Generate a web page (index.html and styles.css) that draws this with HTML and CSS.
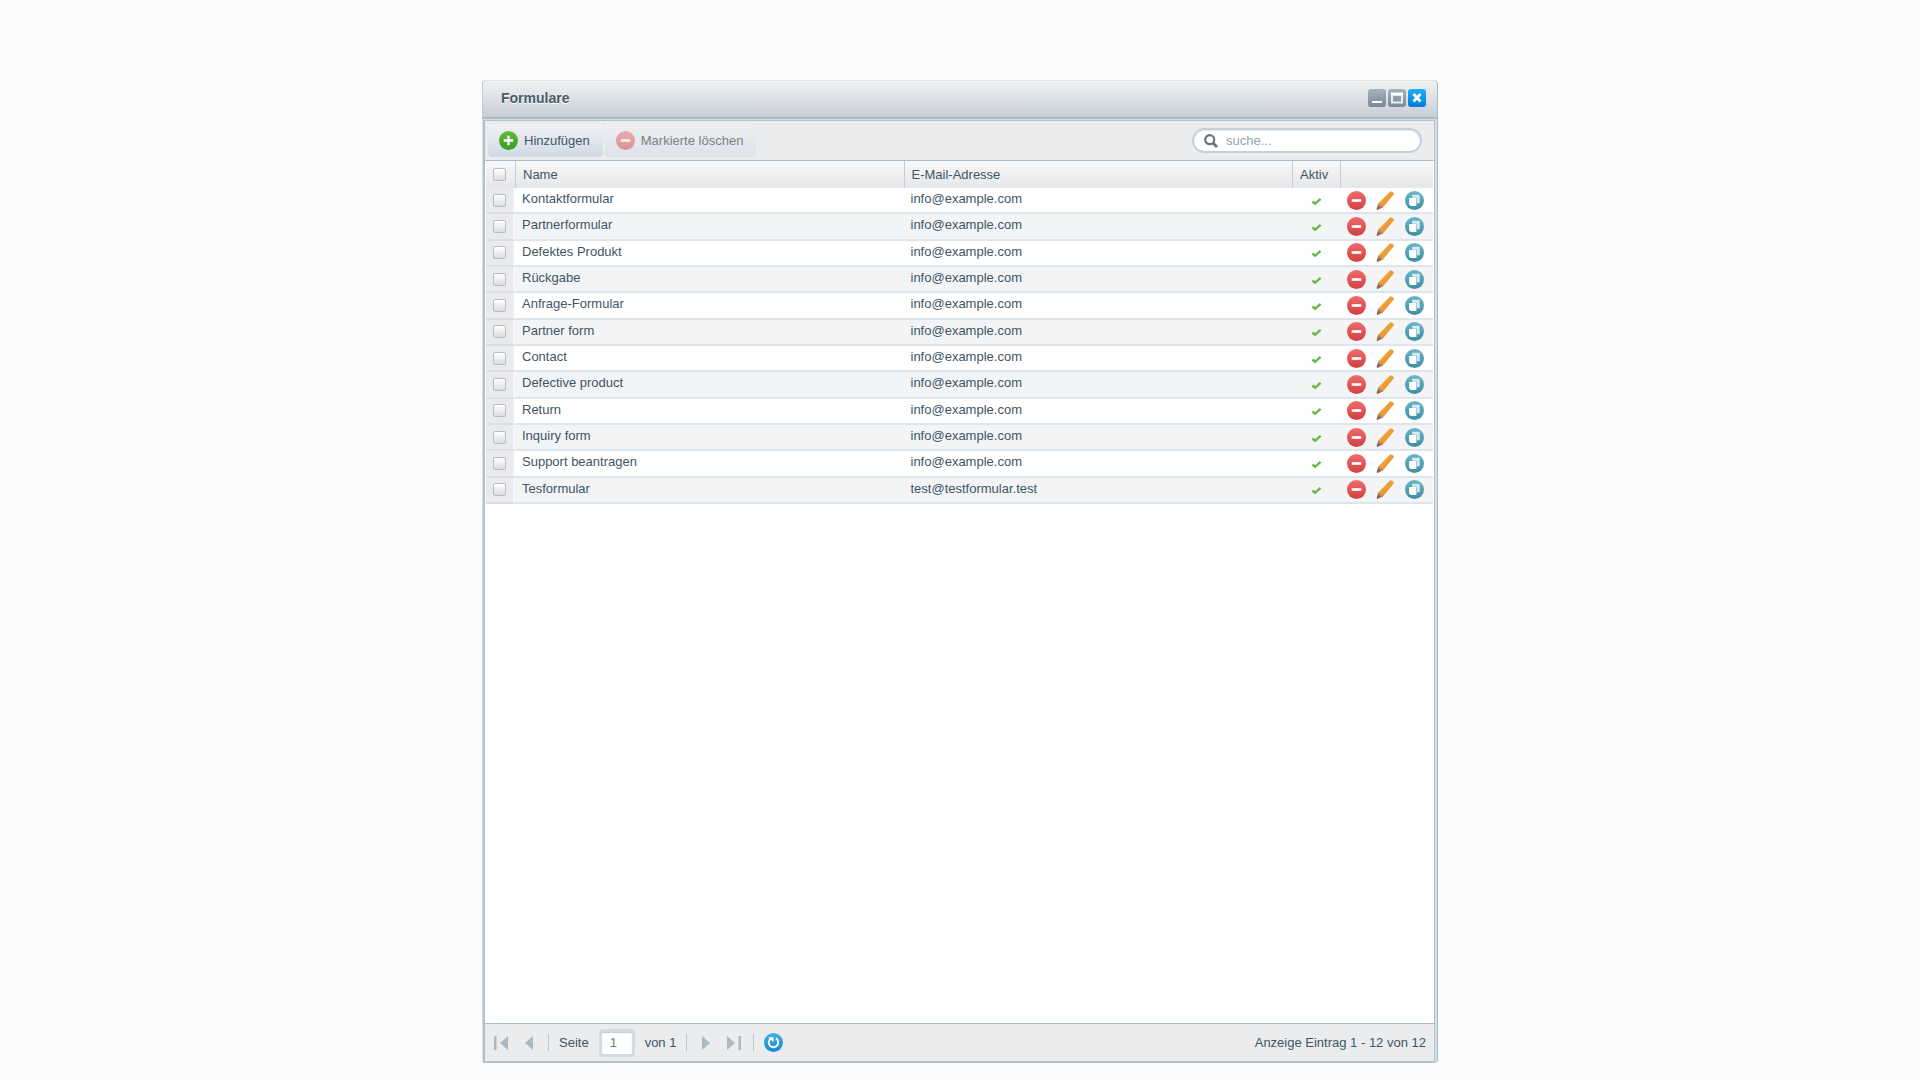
FILE: index.html
```html
<!DOCTYPE html>
<html lang="de">
<head>
<meta charset="utf-8">
<title>Formulare</title>
<link rel="stylesheet" href="styles.css">
<script src="forms.js" defer></script>
</head>
<body>
<svg class="sprite" aria-hidden="true">
  <defs>
    <linearGradient id="green" x2="0" y2="1"><stop offset="0" stop-color="#6cb83c"/><stop offset="1" stop-color="#32a024"/></linearGradient>
    <linearGradient id="red" x2="0" y2="1"><stop offset="0" stop-color="#f06c6c"/><stop offset="1" stop-color="#d23f42"/></linearGradient>
    <linearGradient id="teal" x2="0" y2="1"><stop offset="0" stop-color="#6db3c8"/><stop offset="1" stop-color="#3d8fa3"/></linearGradient>
    <linearGradient id="blue" x2="0" y2="1"><stop offset="0" stop-color="#45aee4"/><stop offset="1" stop-color="#128bcb"/></linearGradient>
    <linearGradient id="orange" x2="1" y2="1"><stop offset="0" stop-color="#f4b04a"/><stop offset="1" stop-color="#e58a1c"/></linearGradient>
  </defs>
  <symbol id="add" viewBox="0 0 20 20"><circle cx="10" cy="10" r="10" fill="url(#green)"/><path d="M10 5v10M5 10h10" stroke="#fff" stroke-width="2.400"/></symbol>
  <symbol id="minus" viewBox="0 0 20 20"><circle cx="10" cy="10" r="10" fill="url(#red)"/><path d="M5 10h10" stroke="#fff" stroke-width="2.800"/></symbol>
  <symbol id="copy" viewBox="0 0 20 20"><circle cx="10" cy="10" r="10" fill="url(#teal)"/><path d="M7.500 4h8v9h-3v-6h-5z" fill="#d5eaf0"/><path d="M4.300 7.300h7.700v8.500h-6l-1.700-1.700z" fill="#fff"/></symbol>
  <symbol id="pencil" viewBox="0 0 20 20"><path d="M15 0.300q3.300 .2 4 2.800L7.500 17l-5-3.800z" fill="url(#orange)"/><path d="M2.500 13.200l5 3.800-6 3q-1 0-.7-1.500z" fill="#8d6253"/><path d="M2.500 13.200l5 3.800-2 .8-3.700-2.800z" fill="#b98765"/></symbol>
  <symbol id="tick" viewBox="0 0 12 10"><path d="M1.500 5l3 2.500 6-5.500" fill="none" stroke="#62b947" stroke-width="2.600"/></symbol>
  <symbol id="reload" viewBox="0 0 20 20"><circle cx="10" cy="10" r="10" fill="url(#blue)"/><path d="M12.500 5.700a5 5 0 1 1-5.500.3" fill="none" stroke="#fff" stroke-width="2"/><path d="M4.500 4.500h5.500v5.300z" fill="#fff"/></symbol>
  <symbol id="previous" viewBox="0 0 8 14"><path d="M8 0v14L0 7z" fill="#aeb8c0"/></symbol>
  <symbol id="first" viewBox="0 0 14 14"><path d="M0 0h2.500v14H0zM14 0v14L6 7z" fill="#aeb8c0"/></symbol>
</svg>

<main class="window">
  <header class="titlebar">
    <h1 class="title">Formulare</h1>
    <button class="control" aria-label="Minimieren"><svg viewBox="0 0 18 18"><path d="M4 13h10" stroke="#fff" stroke-width="2"/></svg></button>
    <button class="control" aria-label="Maximieren"><svg viewBox="0 0 18 18"><path d="M4 5.500h10v8H4z" fill="none" stroke="#e9eef1" stroke-width="2"/><path d="M3 5h12" stroke="#fff" stroke-width="3"/></svg></button>
    <button class="control close" aria-label="Schließen"><svg viewBox="0 0 18 18"><path d="M5.500 5l7 7.500M12.500 5l-7 7.500" stroke="#fff" stroke-width="2.800"/></svg></button>
  </header>
  <div class="content">
    <div class="toolbar">
      <button class="tool"><svg class="icon"><use href="#add"/></svg>Hinzufügen</button>
      <button class="tool" disabled><svg class="icon"><use href="#minus"/></svg>Markierte löschen</button>
      <label class="search">
        <svg class="lens" viewBox="0 0 14 14"><circle cx="5.700" cy="5.700" r="4.500" fill="none" stroke="#66757f" stroke-width="2.200"/><path d="M8.800 8.800l4.200 4.200" stroke="#66757f" stroke-width="2.800"/></svg>
        <input type="search" placeholder="suche..." aria-label="Suche">
      </label>
    </div>
    <div class="listing">
      <table class="grid">
        <colgroup><col class="col-check"><col><col><col class="col-active"><col class="col-actions"></colgroup>
        <thead><tr><th><input class="check" type="checkbox" aria-label="Alle auswählen"></th><th>Name</th><th>E-Mail-Adresse</th><th>Aktiv</th><th></th></tr></thead>
        <tbody id="rows"></tbody>
      </table>
    </div>
    <footer class="paging">
      <button class="page" aria-label="Erste Seite"><svg class="edge"><use href="#first"/></svg></button>
      <button class="page" aria-label="Vorherige Seite"><svg class="step"><use href="#previous"/></svg></button>
      <span class="separator"></span>
      <label for="page-number">Seite</label>
      <input class="number" id="page-number" type="text" value="1">
      <span>von 1</span>
      <span class="separator"></span>
      <button class="page next" aria-label="Nächste Seite"><svg class="step"><use href="#previous"/></svg></button>
      <button class="page next" aria-label="Letzte Seite"><svg class="edge"><use href="#first"/></svg></button>
      <span class="separator"></span>
      <button class="page" aria-label="Aktualisieren"><svg class="icon"><use href="#reload"/></svg></button>
      <span class="summary">Anzeige Eintrag 1 - 12 von 12</span>
    </footer>
  </div>
</main>
</body>
</html>
```
FILE: styles.css
```css
* { box-sizing: border-box; }
body {
  margin: 0;
  min-height: 100vh;
  padding: 80px 0 17px;
  display: flex;
  justify-content: center;
  background: #fcfcfc;
  color: #3f5563;
  font: 13px/16px "Liberation Sans", Arial, sans-serif;
}
button, input { font: inherit; color: inherit; margin: 0; }
button { border: 0; padding: 0; background: none; }
svg { display: block; flex: none; }
.sprite { position: absolute; width: 0; height: 0; }
.icon { width: 19px; height: 19px; }

.window {
  width: 50%;
  min-width: 700px;
  max-width: 956px;
  display: flex;
  flex-direction: column;
  background: #d3dee5;
  border-right: 1px solid #a9bac5;
  border-radius: 4px;
}
.titlebar {
  display: flex;
  align-items: center;
  gap: 2px;
  height: 39px;
  padding: 0 11px 2px 18px;
  border-top: 1px solid #dfe2e4;
  border-left: 1px solid #c3ced6;
  border-bottom: 2px solid #a9bbc6;
  border-radius: 4px 4px 0 0;
  background: linear-gradient(#f0f1f1, #dfe2e4 45%, #c5cdd4);
}
.title { margin: 0 auto 0 0; font-size: 14px; line-height: 18px; color: #475c69; text-shadow: 0 1px #fff; }
.control { width: 18px; height: 18px; border-radius: 3px; background: linear-gradient(#a5b2bc, #78899a); }
.control svg { width: 18px; height: 18px; }
.close { background: linear-gradient(#1cb1fc, #047ad5); }
.content {
  flex: 1;
  display: flex;
  flex-direction: column;
  margin: 1px 2px 0 1px;
  border: solid #b3c3cd;
  border-width: 1px 1px 2px 2px;
  background: #fff;
}
.toolbar {
  display: flex;
  align-items: center;
  gap: 2px;
  height: 40px;
  padding: 0 12px 0 3px;
  background: #ebecee;
  border-bottom: 1px solid #a9bbc6;
}
.tool {
  display: flex;
  align-items: center;
  gap: 6px;
  height: 33px;
  padding: 0 13px 0 11px;
  border-radius: 4px;
  background: linear-gradient(#f1f3f6, #cfd9e5);
}
.tool:disabled { background: linear-gradient(#eeeff2, #dde3ea); color: #7b7f83; }
.tool:disabled .icon { opacity: .5; }
.search {
  display: flex;
  align-items: center;
  gap: 8px;
  width: 230px;
  height: 25px;
  margin-left: auto;
  padding: 0 10px;
  border: 2px solid #c5d0da;
  border-radius: 13px;
  background: #fff;
  box-shadow: inset 0 1px 1px #e3e6e9;
}
.search input { flex: 1; min-width: 0; padding: 0; border: 0; outline: 0; background: none; }
.search input::placeholder { color: #91a6b3; opacity: 1; }
.lens { width: 14px; height: 14px; }

.listing { flex: 1; padding: 0 1px; }
.grid { width: 100%; height: 343px; table-layout: fixed; border-collapse: separate; border-spacing: 0; }
.col-check { width: 29px; }
.col-active { width: 48px; }
.col-actions { width: 93px; }
th { height: 27px; padding: 0 0 0 7px; text-align: left; font-weight: normal; border-left: 1px solid #c4cdd4; background: linear-gradient(#f9f9f9, #e5e6e8); }
td { padding: 0 0 2px 7px; border-bottom: 2px solid #dfe6eb; }
th:first-child, td:first-child { padding: 0 0 0 7px; border-left: 0; }
td:first-child { background: #e9eaec; border-bottom-color: #dcdee1; border-right: 2px solid #f4f5f6; }
tbody tr:nth-child(even) td:not(:first-child) { background: #f3f4f6; }
td:nth-child(n+4) { padding: 0; }
.tick { width: 11px; height: 9px; margin: 2px auto 0; }
.actions { display: flex; justify-content: space-between; padding: 0 9px 0 7px; }
.check {
  appearance: none;
  display: block;
  width: 13px;
  height: 13px;
  border: 1px solid #b9bcc0;
  border-radius: 2px;
  background: linear-gradient(#fff, #dcdde0);
}

.paging {
  display: flex;
  align-items: center;
  gap: 10px;
  height: 38px;
  padding: 0 8px 0 7px;
  background: #ebecee;
  border-top: 1px solid #a9bbc6;
}
.page { display: flex; justify-content: center; width: 18px; }
.next { transform: rotate(180deg); }
.edge { width: 14px; height: 14px; }
.step { width: 8px; height: 14px; }
.separator { width: 1px; height: 17px; background: #bcc6ce; }
.number { width: 36px; height: 28px; padding: 0 8px; border: 3px solid #d3dbe2; border-radius: 4px; background: #fff; color: #6b7f8c; box-shadow: inset 0 1px 1px #c4c9cd; }
.summary { margin-left: auto; }
```
FILE: forms.js
```js
const example = "info@example.com";
const forms = [
  ["Kontaktformular", example],
  ["Partnerformular", example],
  ["Defektes Produkt", example],
  ["Rückgabe", example],
  ["Anfrage-Formular", example],
  ["Partner form", example],
  ["Contact", example],
  ["Defective product", example],
  ["Return", example],
  ["Inquiry form", example],
  ["Support beantragen", example],
  ["Tesformular", "test@testformular.test"]
];

const action = (label, icon) =>
  `<button aria-label="${label}"><svg class="icon"><use href="#${icon}"/></svg></button>`;

document.getElementById("rows").innerHTML = forms.map(([name, email]) => `
  <tr>
    <td><input class="check" type="checkbox" aria-label="${name} auswählen"></td>
    <td>${name}</td>
    <td>${email}</td>
    <td><svg class="tick" role="img" aria-label="Aktiv"><use href="#tick"/></svg></td>
    <td><div class="actions">${action("Löschen", "minus")}${action("Bearbeiten", "pencil")}${action("Duplizieren", "copy")}</div></td>
  </tr>`).join("");
```
